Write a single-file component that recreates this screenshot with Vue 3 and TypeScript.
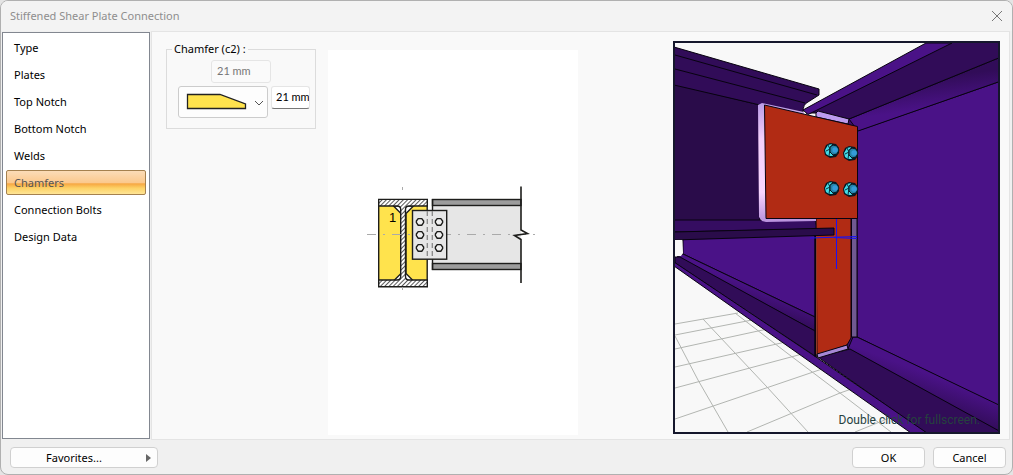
<script setup lang="ts">
import { ref } from 'vue'

const pages = ['Type', 'Plates', 'Top Notch', 'Bottom Notch', 'Welds', 'Chamfers', 'Connection Bolts', 'Design Data']
const activePage = ref('Chamfers')
const chamferDefault = ref('21 mm')
const chamferSize = ref('21 mm')
const chamferShape = ref('bevel')

const holes = [420, 439].flatMap((x) => [222, 235, 248].map((y) => ({ x, y })))
const bolts = [
  { x: 831, y: 150 },
  { x: 850, y: 153 },
  { x: 831, y: 188 },
  { x: 850, y: 189 },
]
</script>

<template>
  <div class="dialog" role="dialog" aria-labelledby="dialog-title">
    <header class="titlebar">
      <h1 id="dialog-title">Stiffened Shear Plate Connection</h1>
      <button class="close" type="button" aria-label="Close">
        <svg width="12" height="12" viewBox="0 0 12 12"><path d="M1 1L11 11M11 1L1 11" stroke="#777" stroke-width="1" fill="none" /></svg>
      </button>
    </header>

    <div class="body">
      <nav class="pages">
        <button
          v-for="page in pages"
          :key="page"
          type="button"
          :class="{ active: page === activePage }"
          @click="activePage = page"
        >{{ page }}</button>
      </nav>

      <main class="content">
        <fieldset class="chamfer">
          <legend>Chamfer (c2) :</legend>
          <input v-model="chamferDefault" class="default" type="text" disabled aria-label="Default chamfer size" />
          <div class="row">
            <div class="shape">
              <select v-model="chamferShape" aria-label="Chamfer shape">
                <option value="bevel" aria-label="Bevel"></option>
              </select>
              <svg class="shape-icon" width="88" height="30" viewBox="0 0 88 30">
                <path d="M8.500 7.500H41L66.500 17V21.500H8.500Z" fill="#ffe34d" stroke="#222" stroke-width="1.300" />
                <path d="M76 14L80 18L84 14" fill="none" stroke="#555" />
              </svg>
            </div>
            <input v-model="chamferSize" class="size" type="text" aria-label="Chamfer size" />
          </div>
        </fieldset>

        <div class="diagram">
          <svg viewBox="328 50 250 385" width="250" height="385">
            <defs>
              <pattern id="hatch" width="3" height="3" patternUnits="userSpaceOnUse" patternTransform="rotate(45)">
                <rect width="3" height="3" fill="#fff" />
                <path d="M0 0V3" stroke="#222" stroke-width="1.500" />
              </pattern>
            </defs>
            <g stroke="#1d1d1b" stroke-width="1.400">
              <rect x="432.500" y="199" width="88.500" height="71" fill="#e6e6e6" stroke="none" />
              <rect x="432.500" y="199.500" width="88.500" height="6" fill="#9c9c9c" />
              <rect x="432.500" y="263.500" width="88.500" height="6" fill="#9c9c9c" />
              <path d="M432.500 199V270" />
              <rect x="378.700" y="205" width="48.500" height="76" fill="#ffe34d" />
              <path d="M393.500 206H413.500L406 213.500V273.500L413.500 281H393.500L401 273.500V213.500Z" fill="#fff" />
              <path d="M378.700 199.400H427.300V206H409Q405.500 206 405.500 209.500V276.500Q405.500 280 409 280H427.300V286.800H378.700V280H397Q400.700 280 400.700 276.500V209.500Q400.700 206 397 206H378.700Z" fill="url(#hatch)" />
            </g>
            <path d="M367 234.500H540" stroke="#aaa" stroke-dasharray="9 7 2 7" fill="none" />
            <g stroke="#1d1d1b" stroke-width="1.400">
              <rect x="412.500" y="210.500" width="34.200" height="48.700" fill="#e6e6e6" />
              <path d="M427.300 211V259M432.300 211V259" stroke="#888" stroke-width="1.300" stroke-dasharray="5 3" />
              <path
                v-for="h in holes"
                :key="`${h.x}-${h.y}`"
                :transform="`translate(${h.x} ${h.y})`"
                d="M-3.600 -1L-1.800 -3.400H1.800L3.600 -1V0.600L1.800 3.200H-1.800L-3.600 0.600Z"
                fill="#f0f0f0"
              />
            </g>
            <path d="M402.500 187V190M402.500 287V290" stroke="#aaa" fill="none" />
            <path d="M521 186.500V230L527.500 233.500L514.500 235.500L521 239.500V283" fill="none" stroke="#1d1d1b" stroke-width="1.600" />
            <text x="389" y="222" class="mark">1</text>
          </svg>
        </div>

        <div class="view">
          <svg viewBox="675 43 323 389" preserveAspectRatio="xMinYMin slice">
            <defs>
              <linearGradient id="fillet" x1="0.450" y1="0.300" x2="0.550" y2="0.700">
                <stop offset="0" stop-color="#310c58" /><stop offset="1" stop-color="#4a1287" />
              </linearGradient>
              <linearGradient id="fillet-low" x1="0.400" y1="0.650" x2="0.550" y2="0.400">
                <stop offset="0" stop-color="#310c58" /><stop offset="1" stop-color="#4a1287" />
              </linearGradient>
              <linearGradient id="edge" x1="0" x2="0" y1="0" y2="1">
                <stop offset="0" stop-color="#b99be6" /><stop offset="0.300" stop-color="#f3d0fb" />
                <stop offset="0.750" stop-color="#f8d6ff" /><stop offset="1" stop-color="#b790dc" />
              </linearGradient>
            </defs>
            <rect x="675" y="43" width="324" height="389" fill="#f8f8f8" />
            <g fill="none" stroke="#b2b5b1">
              <path d="M675 324L738 313M675 335L752 320M675 349L772 328M675 367L790 341M675 388L806 353M675 419L825 368M747 432L840 393L860 386M855 432L892 417" />
              <path d="M675 336L698 380L728 432M703 319L767 387L808 432M735 313L787 353L840 393L891 432" />
            </g>

            <path d="M846 116L870 110V360L846 352Z" fill="#3c0f6e" />
            <g stroke="#080310" stroke-width="1" stroke-linejoin="round">
              <path d="M857 131L1001 81V407L857 337Z" fill="#4a1287" />
              <path d="M849 119L1001 57V81L858 131Z" fill="url(#fillet)" />
              <path d="M806 113L952 42H1001V57L849 119L816 113Z" fill="#310c58" />
              <path d="M803 110L926 43H952L808 114.500Z" fill="#4a1287" />

              <path d="M848 349L853 337H857L1001 406V433Z" fill="url(#fillet-low)" />
              <path d="M818 357L850 349L1001 432V434H927L815 355Z" fill="#310c58" />
              <path d="M683 239L815 233V317L683 254Z" fill="#4a1287" />
              <path d="M677 257L683 254L815 317V331Z" fill="url(#fillet-low)" />
              <path d="M675 257H680L815 331V356L675 263Z" fill="#310c58" />
              <path d="M674 262L813 355L927 433H911L674 266Z" fill="#4a1287" />

              <path d="M674 84L760 105V221H674Z" fill="#2a0c4a" />
              <path d="M674 47L819 89V95L808 102Q803 104 803 112L760 105L674 85Z" fill="#310c58" />
              <path d="M675 55L817 95M675 69L805 103" fill="none" />
              <path d="M674 220H816Q815 226 820 229L674 232Z" fill="#350d61" />
              <path d="M816 218H851V338L847 345L817 355Z" fill="#b12b14" />
              <path d="M851.500 218H857V337H851.500Z" fill="#705a91" />
              <path d="M815.500 235V357" fill="none" stroke-width="2" />
              <path d="M674 232L834 228V235L674 240Z" fill="#2a0c4a" />
              <path d="M817 354L847 345L848 349L818 358Z" fill="#a687d6" />
              <path d="M816 113L818 111L849 119L848 124L816 117Z" fill="#bd9bf0" />
            </g>
            <path d="M816.500 236V354" stroke="#8b3b27" fill="none" />
            <path d="M675 240H682L683 253L681 256H675Z" fill="#f8f8f8" />

            <path d="M758 105L762 103L804 112V116L768 108V217H816V221L766 222L762 221L759 217Z" fill="url(#edge)" />
            <path d="M764.500 105L857.500 126.500V218.500H766Z" fill="#b12b14" stroke="#080310" />
            <path d="M836.500 219V269M810 238L857 236.500M834 237.500L857 238.500" fill="none" stroke="#1a12f2" />

            <g v-for="b in bolts" :key="`${b.x}-${b.y}`" :transform="`translate(${b.x} ${b.y})`">
              <path d="M-7 0L-5 -5L-1 -7L5 -6L8 -2V3L5 7L-1 8L-6 5Z" fill="#071822" />
              <path d="M-6 0L-3 -5L1 -6L-1 -1L2 6L-2 6L-5 4Z" fill="#42dbe6" />
              <path d="M-5 1L-1 -1M-3 -5L-1 -1L-2 6" fill="none" stroke="#0b3440" />
              <path d="M-1 -3L2 -5L6 -4L8 0L6 4L2 5L-1 2Z" fill="#2583a8" stroke="#071822" />
              <circle cx="4" cy="0" r="2.700" fill="#359bd8" />
            </g>
          </svg>
          <span class="hint">Double click for fullscreen.</span>
        </div>
      </main>
    </div>

    <footer class="footer">
      <button class="favorites" type="button">
        <span>Favorites...</span>
        <svg width="5" height="8" viewBox="0 0 5 8"><path d="M0 0L5 4L0 8Z" fill="#666" /></svg>
      </button>
      <button type="button">OK</button>
      <button type="button">Cancel</button>
    </footer>
  </div>
</template>

<style>
body {
  background: #e4e4e4;
}
</style>

<style scoped>
.dialog,
.dialog * {
  box-sizing: border-box;
}

.dialog {
  display: flex;
  flex-direction: column;
  min-height: 100vh;
  border: 1px solid #b0b0b0;
  border-radius: 8px;
  background: #f0f0f0;
  color: #000;
  font-family: "Noto Sans", "Open Sans", sans-serif;
  font-size: 11px;
  line-height: 16px;
  overflow: hidden;
}

button,
input,
select {
  margin: 0;
  font: inherit;
  color: inherit;
}

svg {
  display: block;
}

.titlebar {
  display: flex;
  align-items: center;
  justify-content: space-between;
  height: 30px;
  padding: 0 8px 0 9px;
  background: #f3f3f3;
}

h1 {
  margin: 0;
  color: #8e8e8e;
  font-size: 11px;
  font-weight: 400;
}

.close {
  padding: 0 1px;
  border: 0;
  background: none;
}

.body {
  display: flex;
  flex: 1;
  gap: 1px;
  padding: 0 2px 0 1px;
}

.pages {
  display: flex;
  flex-direction: column;
  gap: 2px;
  width: 148px;
  margin: 1px 0;
  padding: 2px 3px;
  border: 1px solid #828790;
  background: #fff;
}

.pages button {
  height: 25px;
  padding: 0 7px;
  border: 1px solid transparent;
  border-radius: 2px;
  background: none;
  text-align: left;
}

.pages .active {
  border-color: #a5814f;
  background: linear-gradient(#fbdcb8 0%, #fbc98e 50%, #f7a843 56%, #fdd267 75%, #ffe596 100%);
  color: #555;
}

.content {
  display: flex;
  flex: 1;
  align-items: flex-start;
  padding: 9px 9px 4px 14px;
  border: 1px solid #e4e4e4;
  background: #f9f9f9;
}

.chamfer {
  width: 150px;
  min-width: 0;
  margin: 0;
  padding: 3px 5px 10px 11px;
  border: 1px solid #dcdcdc;
}

legend {
  margin-left: -6px;
  padding: 0 2px;
}

input {
  height: 23px;
  padding: 0 5px;
  border: 1px solid #e5e5e5;
  border-radius: 3px;
  background: #fff;
  font-family: Lato, sans-serif;
  font-size: 11px;
}

.default {
  display: block;
  width: 60px;
  margin-left: 33px;
  padding-bottom: 2px;
  background: #fafafa;
  color: #777;
}

.row {
  display: flex;
  gap: 3px;
  margin-top: 3px;
}

.shape {
  position: relative;
  flex: none;
}

.shape select {
  display: block;
  width: 90px;
  height: 32px;
  border: 1px solid #ccc;
  border-radius: 3px;
  background: #fdfdfd;
  appearance: none;
}

.shape-icon {
  position: absolute;
  top: 1px;
  left: 1px;
  pointer-events: none;
}

.size {
  width: 39px;
  padding: 0 0 2px 4px;
  border-bottom-color: #777;
}

.diagram {
  margin: 9px 0 0 12px;
  background: #fff;
}

.mark {
  font-family: "Liberation Sans", sans-serif;
  font-size: 13px;
}

.view {
  position: relative;
  align-self: stretch;
  width: 327px;
  margin: 0 0 1px auto;
  border: 2px solid #15172c;
}

.view svg {
  width: 100%;
  height: 100%;
}

.hint {
  position: absolute;
  right: 18px;
  bottom: 4px;
  color: #26413f;
  font-family: Roboto, sans-serif;
  font-size: 12px;
}

.footer {
  display: flex;
  gap: 8px;
  padding: 7px 6px 6px;
}

.footer button {
  width: 73px;
  height: 21px;
  padding: 0;
  border: 1px solid #d0d0d0;
  border-radius: 4px;
  background: #fdfdfd;
}

.footer .favorites {
  display: flex;
  align-items: center;
  width: 148px;
  margin: 0 auto 0 3px;
  padding: 0 6px 0 0;
}

.favorites span {
  flex: 1;
  padding-right: 9px;
}
</style>
